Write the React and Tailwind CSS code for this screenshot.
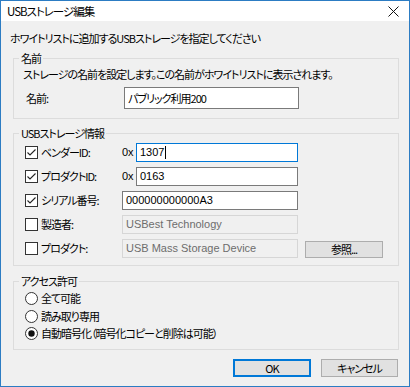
import React from "react";

const JP = "font-['Noto_Sans_CJK_JP',sans-serif] [font-feature-settings:'palt'] tracking-[-1px]";

function CheckBox({ checked }) {
  return (
    <svg width="13" height="13" viewBox="0 0 13 13" className="shrink-0">
      <rect x="0.5" y="0.5" width="12" height="12" fill="#fff" stroke="#333" />
      {checked && (
        <path d="M2.5 6.5 L5 9 L10.5 3.5" fill="none" stroke="#222" strokeWidth="1.1" />
      )}
    </svg>
  );
}

function Radio({ checked }) {
  return (
    <svg width="13" height="13" viewBox="0 0 13 13" className="shrink-0">
      <circle cx="6.5" cy="6.5" r="6" fill="#fff" stroke="#333" />
      {checked && <circle cx="6.5" cy="6.5" r="3.2" fill="#111" />}
    </svg>
  );
}

function Group({ title, className, children }) {
  return (
    <div className={`relative border border-[#dcdcdc] w-[386px] ${className}`}>
      <span className="absolute -top-[9px] left-[5px] bg-[#f0f0f0] px-[2px] leading-[16px]">
        {title}
      </span>
      {children}
    </div>
  );
}

function TextBox({ value, width, focused, disabled, caret }) {
  const border = focused
    ? "border-[#0078d7]"
    : disabled
    ? "border-[#d6d6d6]"
    : "border-[#7a7a7a]";
  return (
    <div
      className={`flex items-center h-[19px] border ${border} ${
        disabled ? "bg-[#f0f0f0] text-[#6d6d6d]" : "bg-white text-black"
      } tracking-normal px-[3px] font-['Liberation_Sans',sans-serif] text-[11px] ${width}`}
    >
      <span>{value}</span>
      {caret && <span className="w-px h-[13px] bg-black ml-[1px]" />}
    </div>
  );
}

function Row({ checked, label, prefix, value, focused, disabled, extra }) {
  return (
    <div className="flex items-center h-[19px]">
      <CheckBox checked={checked} />
      <span className="ml-[3px] w-[78px]">{label}</span>
      {prefix ? (
        <span className="w-[14px] ml-[3px] tracking-normal font-['Liberation_Sans',sans-serif] text-[11px]">0x</span>
      ) : (
        <span className="w-[3px]" />
      )}
      <TextBox
        value={value}
        width={prefix ? "w-[162px]" : "w-[176px]"}
        focused={focused}
        disabled={disabled}
        caret={focused}
      />
      {extra}
    </div>
  );
}

export default function App() {
  return (
    <div
      className={`w-[410px] h-[387px] border border-[#2c7cc3] bg-[#f0f0f0] flex flex-col text-[11px] text-black whitespace-nowrap ${JP}`}
    >
      <div className="h-[20px] bg-white flex items-center justify-between pl-[6px] pr-[10px]">
        <span className="leading-[16px] text-[11.5px]">USBストレージ編集</span>
        <svg width="11" height="11" viewBox="0 0 11 11">
          <path d="M0.5 0.5 L10.5 10.5 M10.5 0.5 L0.5 10.5" stroke="#111" strokeWidth="1" />
        </svg>
      </div>

      <div className="flex flex-col pl-[12px] pt-[9px]">
        <div className="-ml-[3px] leading-[16px]">ホワイトリストに追加するUSBストレージを指定してください</div>

        <Group title="名前" className="mt-[12px] h-[61px] pt-[7px] pl-[9px]">
          <div className="leading-[16px]">ストレージの名前を設定します。この名前がホワイトリストに表示されます。</div>
          <div className="flex items-center mt-[5px]">
            <span className="ml-[3px] w-[98px]">名前:</span>
            <div className="flex items-center h-[22px] w-[175px] border border-[#7a7a7a] bg-white px-[3px]">
              パブリック利用200
            </div>
          </div>
        </Group>

        <Group title="USBストレージ情報" className="mt-[14px] h-[133px] pt-[9px] pl-[11px] flex flex-col gap-[5px]">
          <Row checked label="ベンダーID:" prefix value="1307" focused />
          <Row checked label="プロダクトID:" prefix value="0163" />
          <Row checked label="シリアル番号:" value="000000000000A3" />
          <Row label="製造者:" value="USBest Technology" disabled />
          <Row
            label="プロダクト:"
            value="USB Mass Storage Device"
            disabled
            extra={
              <button className="ml-[7px] mt-[1px] w-[78px] h-[17px] bg-[#e1e1e1] border border-[#adadad] flex items-center justify-center leading-none">
                参照...
              </button>
            }
          />
        </Group>

        <Group title="アクセス許可" className="mt-[15px] h-[69px] pt-[8px] pl-[11px] flex flex-col">
          <div className="flex items-center h-[17px] gap-[3px]">
            <Radio />
            <span>全て可能</span>
          </div>
          <div className="flex items-center h-[18px] gap-[3px]">
            <Radio />
            <span>読み取り専用</span>
          </div>
          <div className="flex items-center h-[17px] gap-[3px]">
            <Radio checked />
            <span>自動暗号化（暗号化コピーと削除は可能）</span>
          </div>
        </Group>

        <div className="flex justify-end gap-[10px] mt-[9px] pr-[11px]">
          <button className="w-[78px] h-[18px] bg-[#e1e1e1] border-2 border-[#0078d7] flex items-center justify-center leading-none">
            OK
          </button>
          <button className="w-[77px] h-[18px] bg-[#e1e1e1] border border-[#adadad] flex items-center justify-center leading-none">
            キャンセル
          </button>
        </div>
      </div>
    </div>
  );
}
